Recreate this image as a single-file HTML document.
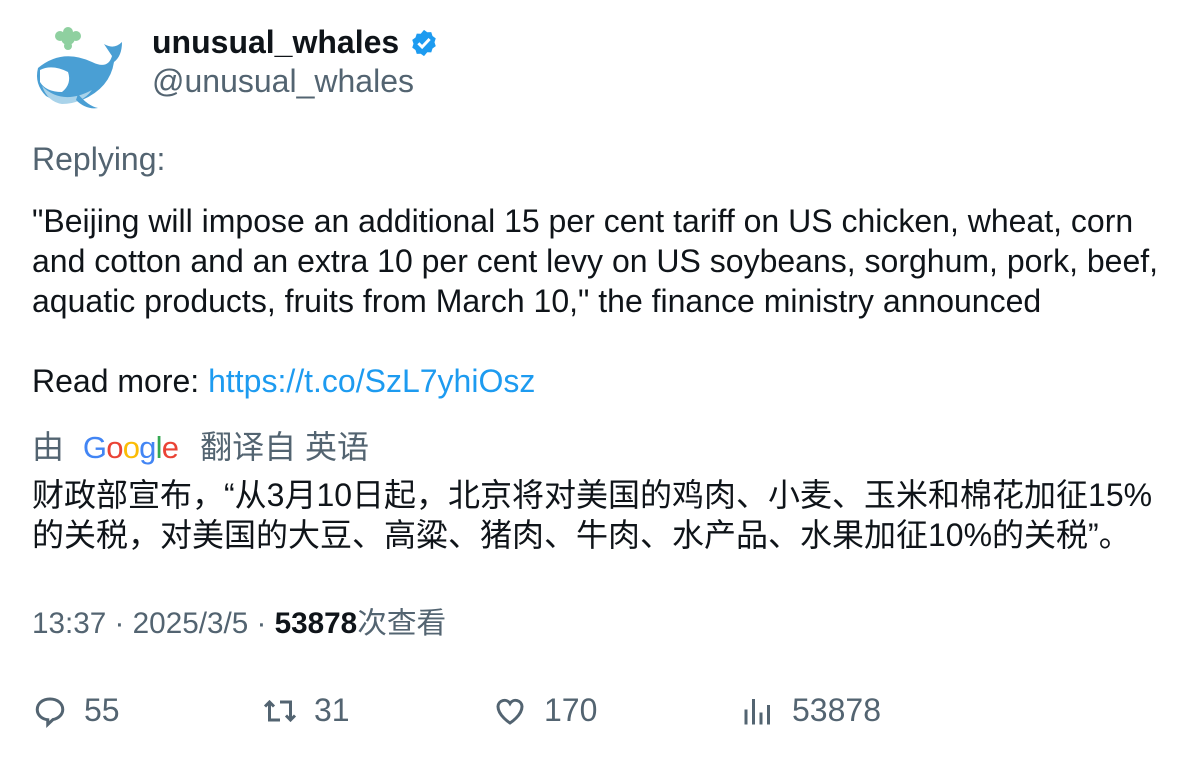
<!DOCTYPE html>
<html><head><meta charset="utf-8"><style>
body{margin:0;background:#fff;width:1196px;height:758px;overflow:hidden;font-family:"Liberation Sans","Noto Sans CJK SC",sans-serif;color:#0f1419}
.a{position:absolute;white-space:nowrap}
.g{color:#536471}
.t{font-size:32px;line-height:40px}
.act{position:absolute;top:692px;font-size:32px;color:#536471;display:flex;align-items:center}
.act svg{width:36px;height:36px;margin-right:16px}
</style></head><body>
<svg class="a" style="left:32px;top:26px" width="96" height="86" viewBox="0 0 96 86">
<g fill="#8fd0a0"><circle cx="36" cy="12" r="7"/><circle cx="28" cy="10" r="5"/><circle cx="44" cy="10" r="5"/><circle cx="36" cy="6" r="5"/><circle cx="36" cy="20" r="4"/></g>
<path d="M6 42 Q30 22 60 36 Q76 44 80 30 L72 18 Q82 24 90 16 Q90 30 82 36 Q78 62 50 74 Q30 80 14 70 Q2 58 6 42Z" fill="#4a9fd4"/>
<path d="M8 44 Q20 38 36 46 Q40 58 30 66 Q14 66 8 56Z" fill="#fff"/>
<path d="M10 60 Q30 80 60 64 Q50 78 30 78 Q16 76 10 60Z" fill="#a9d3ea"/>
<path d="M46 68 Q56 80 66 82 Q54 84 44 74Z" fill="#4a9fd4"/>
</svg>
<div class="a" style="left:152px;top:22px;font-size:32px;font-weight:bold;line-height:40px">unusual_whales</div>
<svg class="a" style="left:409px;top:28px" width="30" height="30" viewBox="0 0 24 24"><path fill="#1d9bf0" d="M12 1.5l2.6 1.9 3.2-.1 1 3.1 2.6 1.9-1 3.1 1 3.1-2.6 1.9-1 3.1-3.2-.1L12 22.5l-2.6-1.9-3.2.1-1-3.1-2.6-1.9 1-3.1-1-3.1 2.6-1.9 1-3.1 3.2.1z"/><path d="M7.5 12.2l3 3 6-6.4" stroke="#fff" stroke-width="2.4" fill="none"/></svg>
<div class="a g" style="left:152px;top:61px;font-size:32px;line-height:40px">@unusual_whales</div>
<div class="a g t" style="left:32px;top:139px">Replying:</div>
<div class="a t" style="left:32px;top:201px">"Beijing will impose an additional 15 per cent tariff on US chicken, wheat, corn<br>and cotton and an extra 10 per cent levy on US soybeans, sorghum, pork, beef,<br>aquatic products, fruits from March 10," the finance ministry announced</div>
<div class="a t" style="left:32px;top:361px">Read more: <span style="color:#1d9bf0">https://t.co/SzL7yhiOsz</span></div>
<div class="a g t" style="left:32px;top:427px">由 <span style="font-family:'Liberation Sans',sans-serif;font-size:31px;letter-spacing:-0.8px;margin:0 22px 0 10px"><span style="color:#4285f4">G</span><span style="color:#ea4335">o</span><span style="color:#fbbc05">o</span><span style="color:#4285f4">g</span><span style="color:#34a853">l</span><span style="color:#ea4335">e</span></span>翻译自 英语</div>
<div class="a t" style="left:32px;top:475px">财政部宣布，“从3月10日起，北京将对美国的鸡肉、小麦、玉米和棉花加征15%<br>的关税，对美国的大豆、高粱、猪肉、牛肉、水产品、水果加征10%的关税”。</div>
<div class="a g" style="left:32px;top:604px;font-size:29.7px;line-height:40px">13:37 · 2025/3/5 · <b style="color:#0f1419">53878</b>次查看</div>
<div class="act" style="left:32px"><svg viewBox="0 0 24 24"><path d="M12 4C7 4 3.5 7 3.5 11c0 3.8 3.2 6.5 7 6.8V21l3.5-3.3c3.8-.8 6.5-3.4 6.5-6.7C20.5 7 17 4 12 4z" fill="none" stroke="#536471" stroke-width="2"/></svg>55</div>
<div class="act" style="left:262px"><svg viewBox="0 0 24 24" fill="none" stroke="#536471" stroke-width="2"><path d="M5 19V6M2 9l3-3 3 3M5 18h7M19 5v13M16 15l3 3 3-3M19 6h-7"/></svg>31</div>
<div class="act" style="left:492px"><svg viewBox="0 0 24 24"><path d="M12 20s-8-5-8-11a4.3 4.3 0 0 1 8-2 4.3 4.3 0 0 1 8 2c0 6-8 11-8 11z" fill="none" stroke="#536471" stroke-width="2"/></svg>170</div>
<div class="act" style="left:740px"><svg viewBox="0 0 24 24" stroke="#536471" stroke-width="2"><path d="M4 21V11M9 21V4M14 21V13M19 21V8"/></svg>53878</div>
</body></html>
